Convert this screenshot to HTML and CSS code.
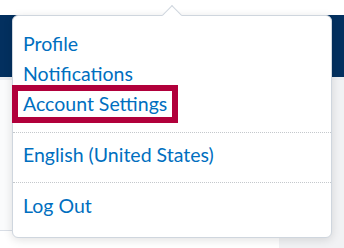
FILE: index.html
```html
<!DOCTYPE html>
<html lang="en">
<head>
    <meta charset="UTF-8">
    <title>Account menu</title>
    <link rel="stylesheet" href="styles.css">
</head>
<body>
    <div class="page">
        <div class="topbar"></div>
        <div class="navbar"></div>
        <div class="content">
            <div class="panel"></div>
            <div class="side"></div>
        </div>
    </div>

    <div class="dropdown">
        <span class="arrow"></span>
        <div class="group first">
            <a class="item" href="#">Profile</a>
            <a class="item" href="#">Notifications</a>
            <a class="item" href="#"><span class="focus">Account Settings</span></a>
        </div>
        <div class="group middle">
            <a class="item" href="#">English (United States)</a>
        </div>
        <div class="group last">
            <a class="item" href="#">Log Out</a>
        </div>
    </div>
</body>
</html>
```

FILE: styles.css
```css
body {
    margin: 0;
    font-family: Lato, "Open Sans", sans-serif;
    background-color: #ffffff;
    overflow: hidden;
}
.page {
    width: 344px;
    height: 248px;
    display: flex;
    flex-direction: column;
}
.topbar {
    height: 15px;
    background-color: #ffffff;
}
.navbar {
    height: 62px;
    background-color: #03305f;
}
.content {
    flex: 1;
    display: flex;
    border-top: 3px solid #eceef1;
}
.panel {
    width: 279px;
    height: 150px;
    background-color: #fafbfc;
    border-bottom: 1px solid #d9dee6;
}
.side {
    flex: 1;
    background-color: #f1f2f4;
}
.dropdown {
    position: absolute;
    left: 12px;
    top: 15px;
    width: 318px;
    background-color: #ffffff;
    border: 1px solid #cfd6de;
    border-radius: 6px;
    box-shadow: 0 2px 10px rgba(0, 0, 0, 0.12);
}
.arrow {
    position: absolute;
    left: 152px;
    top: -8px;
    width: 14px;
    height: 14px;
    background-color: #ffffff;
    border-top: 1px solid #cfd6de;
    border-left: 1px solid #cfd6de;
    transform: rotate(45deg);
    box-sizing: border-box;
}
.group {
    padding: 0 10px;
}
.group.first {
    padding-top: 13px;
    padding-bottom: 13px;
}
.group.middle {
    padding-top: 7px;
    padding-bottom: 12px;
}
.group.last {
    padding-top: 8px;
    padding-bottom: 16px;
}
.group + .group {
    border-top: 1px dotted #c4c8cc;
}
.item {
    display: block;
    font-size: 19.5px;
    line-height: 30px;
    color: #006fbf;
    text-decoration: none;
}
.focus {
    display: inline-block;
    line-height: 26px;
    margin-left: -5px;
    padding: 0 5px 0 5px;
    outline: 6px solid #b1003b;
}
```
